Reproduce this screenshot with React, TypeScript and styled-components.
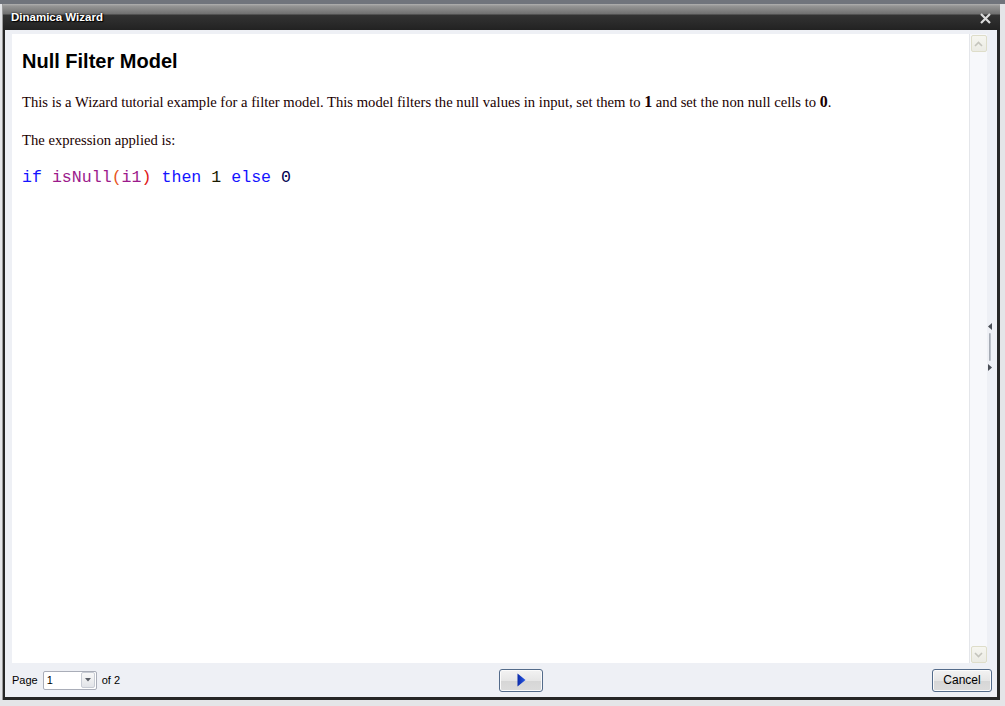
import styled, { createGlobalStyle } from "styled-components";

const GlobalStyle = createGlobalStyle`
  html, body {
    margin: 0;
    padding: 0;
  }
  body {
    width: 1005px;
    height: 706px;
    overflow: hidden;
  }
`;

const Desktop = styled.div`
  width: 1005px;
  height: 706px;
  box-sizing: border-box;
  padding: 4px 5px 6px 2px;
  display: flex;
  background: linear-gradient(
    to bottom,
    #70747c 0,
    #70747c 4px,
    #e4e5e8 4px,
    #e4e5e8 100%
  );
`;

const Window = styled.div`
  flex: 1;
  display: flex;
  flex-direction: column;
  background: #262626;
  border-left: 1px solid #9a9a9a;
  padding: 0 3px 3px 2px;
`;

const TitleBar = styled.div`
  height: 26px;
  margin: 0 -3px 0 -2px;
  padding: 0 9px 0 8px;
  display: flex;
  align-items: center;
  justify-content: space-between;
  background: linear-gradient(
    to bottom,
    #b0b0b0 0,
    #959595 2px,
    #707070 10px,
    #333333 11px,
    #222222 100%
  );
  font-family: "Liberation Sans", Arial, sans-serif;
  font-weight: bold;
  font-size: 11.5px;
  color: #ffffff;
  text-shadow: 0 0 2px #000, 1px 1px 1px #000;
`;

const CloseIcon = styled.svg`
  width: 11px;
  height: 11px;
  margin-top: 2px;
`;

const Body = styled.div`
  flex: 1;
  display: flex;
  flex-direction: column;
  background: #eef0f5;
`;

const MainRow = styled.div`
  flex: 1;
  display: flex;
  padding: 4px 0 0 7px;
`;

const Page = styled.div`
  flex: 1;
  background: #ffffff;
  padding: 14px 10px 0 10px;
`;

const Heading = styled.h1`
  margin: 0 0 18px;
  font-family: "Liberation Sans", Arial, sans-serif;
  font-size: 20px;
  font-weight: bold;
  color: #000;
  line-height: 26px;
`;

const Paragraph = styled.p`
  margin: 0 0 18px;
  font-family: "Liberation Serif", "Times New Roman", serif;
  font-size: 14.65px;
  line-height: 20px;
  color: #1a0000;
`;

const Num = styled.b`
  font-size: 16px;
`;

const Code = styled.div`
  margin-top: 15px;
  font-family: "Liberation Mono", "Courier New", monospace;
  font-size: 16.6px;
  line-height: 20px;
  white-space: pre;
`;

const Tok = styled.span<{ $c: string }>`
  color: ${(p) => p.$c};
`;

const ScrollTrack = styled.div`
  width: 17px;
  border-left: 1px solid #e4e6ea;
  background: #f7f8fb;
  display: flex;
  flex-direction: column;
  justify-content: space-between;
  align-items: center;
  padding: 1px 0 0;
`;

const ScrollButton = styled.div`
  width: 14px;
  height: 15px;
  border: 1px solid #deddc9;
  border-radius: 2px;
  background: linear-gradient(to bottom, #f6f6f0, #ebebe4);
  display: flex;
  align-items: center;
  justify-content: center;
`;

const Splitter = styled.div`
  width: 9px;
  display: flex;
  flex-direction: column;
  align-items: flex-start;
  justify-content: center;
  padding-left: 1px;
  padding-bottom: 4px;
  gap: 3px;
`;

const SplitBar = styled.div`
  width: 2px;
  height: 28px;
  margin-left: 1px;
  border-radius: 1px;
  background: linear-gradient(to right, #9aa0aa, #c8ccd4);
`;

const Footer = styled.div`
  height: 34px;
  display: grid;
  grid-template-columns: 487px 44px 1fr;
  align-items: center;
  padding: 0 5px 0 7px;
  font-family: "Liberation Sans", Arial, sans-serif;
  font-size: 11px;
  color: #000;
`;

const PageGroup = styled.div`
  display: flex;
  align-items: center;
  gap: 5px;
`;

const Select = styled.div`
  width: 48px;
  height: 17px;
  border: 1px solid #a9adb8;
  border-radius: 2px;
  background: #fff;
  display: flex;
  align-items: center;
  justify-content: space-between;
  padding: 0 1px 0 3px;
  box-sizing: content-box;
`;

const SelectArrow = styled.div`
  width: 12px;
  height: 14px;
  border: 1px solid #c8ccd4;
  border-radius: 2px;
  background: linear-gradient(to bottom, #f8f8f8, #e2e4e8);
  display: flex;
  align-items: center;
  justify-content: center;
`;

const Button = styled.button<{ $width: number }>`
  width: ${(p) => p.$width}px;
  height: 23px;
  margin: 0;
  padding: 0;
  border: 1px solid #536b8a;
  border-radius: 3px;
  background: linear-gradient(to bottom, #f3f3f3 0, #e6e6e6 50%, #d6d6d6 51%, #dcdcdc 100%);
  box-shadow: inset 0 0 0 1px #fbfbfb;
  font-family: "Liberation Sans", Arial, sans-serif;
  font-size: 12px;
  color: #000;
  display: flex;
  align-items: center;
  justify-content: center;
`;

const RightCell = styled.div`
  display: flex;
  justify-content: flex-end;
`;

export default function App() {
  return (
    <>
      <GlobalStyle />
      <Desktop>
        <Window>
          <TitleBar>
            <span>Dinamica Wizard</span>
            <CloseIcon viewBox="0 0 11 11">
              <path d="M1 1 L10 10 M10 1 L1 10" stroke="#dcdcdc" strokeWidth="2.2" />
            </CloseIcon>
          </TitleBar>
          <Body>
            <MainRow>
              <Page>
                <Heading>Null Filter Model</Heading>
                <Paragraph>
                  This is a Wizard tutorial example for a filter model. This model filters the null
                  values in input, set them to <Num>1</Num> and set the non null cells to <Num>0</Num>.
                </Paragraph>
                <Paragraph>The expression applied is:</Paragraph>
                <Code>
                  <Tok $c="#1414ff">if</Tok> <Tok $c="#9c1a8c">isNull</Tok>
                  <Tok $c="#e8541c">(</Tok>
                  <Tok $c="#9c1a8c">i1</Tok>
                  <Tok $c="#e01818">)</Tok> <Tok $c="#1414ff">then</Tok>{" "}
                  <Tok $c="#1a1a00">1</Tok> <Tok $c="#1414ff">else</Tok>{" "}
                  <Tok $c="#000050">0</Tok>
                </Code>
              </Page>
              <ScrollTrack>
                <ScrollButton>
                  <svg width="9" height="6" viewBox="0 0 9 6">
                    <path d="M1 5 L4.5 1.5 L8 5" fill="none" stroke="#c4c4bc" strokeWidth="1.6" />
                  </svg>
                </ScrollButton>
                <ScrollButton>
                  <svg width="9" height="6" viewBox="0 0 9 6">
                    <path d="M1 1 L4.5 4.5 L8 1" fill="none" stroke="#c4c4bc" strokeWidth="1.6" />
                  </svg>
                </ScrollButton>
              </ScrollTrack>
              <Splitter>
                <svg width="4" height="7" viewBox="0 0 4 7">
                  <path d="M4 0 L0 3.5 L4 7 Z" fill="#4a4e56" />
                </svg>
                <SplitBar />
                <svg width="4" height="7" viewBox="0 0 4 7">
                  <path d="M0 0 L4 3.5 L0 7 Z" fill="#4a4e56" />
                </svg>
              </Splitter>
            </MainRow>
            <Footer>
              <PageGroup>
                <span>Page</span>
                <Select>
                  <span>1</span>
                  <SelectArrow>
                    <svg width="6" height="4" viewBox="0 0 6 4">
                      <path d="M0 0 L6 0 L3 3.5 Z" fill="#5a5e66" />
                    </svg>
                  </SelectArrow>
                </Select>
                <span>of 2</span>
              </PageGroup>
              <Button $width={44}>
                <svg width="9" height="14" viewBox="0 0 9 14">
                  <defs>
                    <linearGradient id="nextGrad" x1="0" y1="0" x2="1" y2="0">
                      <stop offset="0" stopColor="#0a2aa8" />
                      <stop offset="1" stopColor="#2a5ae8" />
                    </linearGradient>
                  </defs>
                  <path d="M0.5 0.5 L8.5 7 L0.5 13.5 Z" fill="url(#nextGrad)" />
                </svg>
              </Button>
              <RightCell>
                <Button $width={60}>Cancel</Button>
              </RightCell>
            </Footer>
          </Body>
        </Window>
      </Desktop>
    </>
  );
}
